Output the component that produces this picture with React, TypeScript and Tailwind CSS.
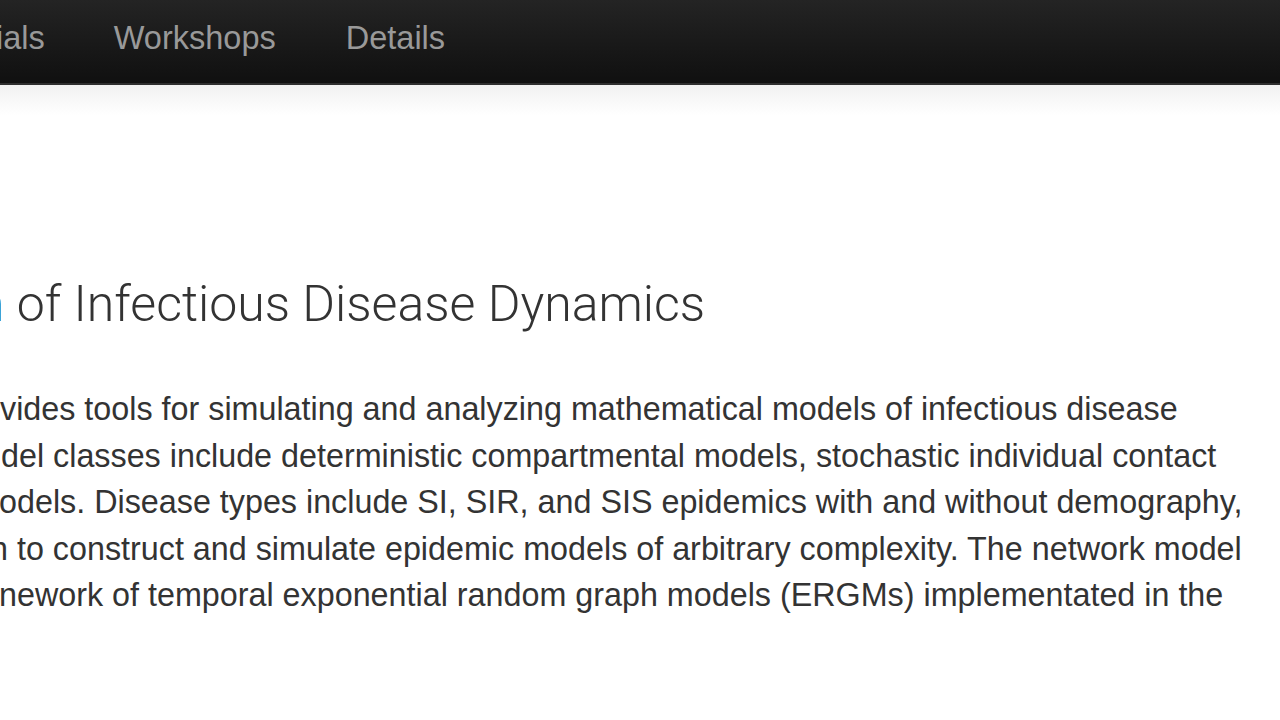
import React from 'react'

const navItems = ['Workshops', 'Details']

const lines = [
  { text: 'vides tools for simulating and analyzing mathematical models of infectious disease', ml: 'ml-[0px]' },
  { text: 'del classes include deterministic compartmental models, stochastic individual contact', ml: 'ml-[1px]' },
  { text: 'odels. Disease types include SI, SIR, and SIS epidemics with and without demography,', ml: 'ml-[-1px]' },
  { text: 'n to construct and simulate epidemic models of arbitrary complexity. The network model', ml: 'ml-[-10px]' },
  { text: 'nework of temporal exponential random graph models (ERGMs) implementated in the', ml: 'ml-[-1px]' },
]

const App = () => {
  return (
    <div className="w-[1280px] h-[720px] overflow-hidden bg-white font-['Liberation_Sans',Arial,sans-serif]">
      {/* Navbar */}
      <nav className="h-[85px] bg-gradient-to-b from-[#242424] to-[#101010] border-b-2 border-[#2e2e2e] flex items-start pt-[22px] text-[32.5px] leading-[32px] text-[#999] whitespace-nowrap">
        <span className="ml-[-4px] pr-[34px]">ials</span>
        {navItems.map((item) => (
          <span key={item} className="px-[35px]">
            {item}
          </span>
        ))}
      </nav>
      <div className="h-[30px] bg-gradient-to-b from-[#f1f1f1] to-white" />

      {/* Hero */}
      <div className="pt-[162px] text-[#333] whitespace-nowrap">
        <h1 className="text-[50px] leading-[54px] font-light font-['Roboto',sans-serif] ml-[-23px]">
          <span className="text-[#0088cc]">n</span> of Infectious Disease Dynamics
        </h1>
        <div className="mt-[55px] text-[32.3px] leading-[46.5px]">
          {lines.map((line) => (
            <div key={line.text} className={line.ml}>
              {line.text}
            </div>
          ))}
        </div>
      </div>
    </div>
  )
}

export default App
